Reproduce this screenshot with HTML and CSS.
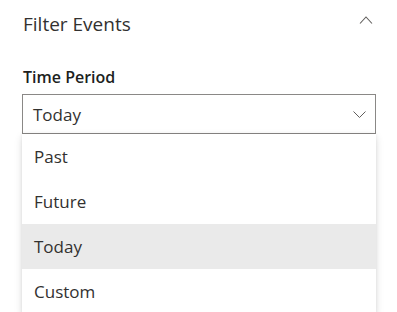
FILE: index.html
```html
<!DOCTYPE html>
<html lang="en">
<head>
    <meta charset="UTF-8">
    <meta name="viewport" content="width=device-width, initial-scale=1.0">
    <title>Filter Events</title>
    <link rel="stylesheet" href="styles.css">
</head>
<body>
    <div class="panel">
        <div class="panel-header">
            <h2 class="panel-title">Filter Events</h2>
            <svg class="chevron-up" width="14" height="8" viewBox="0 0 14 8">
                <path d="M1 7.5 L7 1 L13 7.5" fill="none" stroke="#605e5c" stroke-width="1.1"/>
            </svg>
        </div>
        <div class="field">
            <label class="field-label">Time Period</label>
            <div class="dropdown">
                <div class="dropdown-box">
                    <span class="dropdown-value">Today</span>
                    <svg class="chevron-down" width="13" height="7" viewBox="0 0 13 7">
                        <path d="M0.5 0.5 L6.5 6.5 L12.5 0.5" fill="none" stroke="#605e5c" stroke-width="1"/>
                    </svg>
                </div>
                <ul class="dropdown-list">
                    <li class="option">Past</li>
                    <li class="option">Future</li>
                    <li class="option selected">Today</li>
                    <li class="option">Custom</li>
                </ul>
            </div>
        </div>
    </div>
</body>
</html>
```

FILE: styles.css
```css
html, body {
    margin: 0;
    height: 100%;
}

body {
    background: #ffffff;
    font-family: "Open Sans", "Noto Sans", sans-serif;
    color: #323130;
    overflow: hidden;
}

.panel {
    padding: 10px 21px 0 22px;
}

.panel-header {
    display: flex;
    justify-content: space-between;
    align-items: center;
    height: 28px;
}

.panel-title {
    margin: 0 0 0 1px;
    font-size: 19px;
    font-weight: 400;
    color: #323130;
}

.chevron-up {
    margin-right: 3px;
    margin-top: -8px;
}

.field {
    margin-top: 28px;
}

.field-label {
    display: block;
    font-size: 16px;
    font-weight: 600;
    line-height: 22px;
    margin: 0 0 6px 1px;
    color: #201f1e;
}

.dropdown-box {
    display: flex;
    justify-content: space-between;
    align-items: center;
    height: 38px;
    border: 1px solid #8a8886;
    padding: 0 9px 0 10px;
}

.dropdown-value {
    font-size: 17px;
}

.dropdown-list {
    list-style: none;
    margin: 0;
    padding: 0;
    background: #ffffff;
    box-shadow: 0 3px 8px rgba(0, 0, 0, 0.13), 0 0 3px rgba(0, 0, 0, 0.08);
}

.option {
    height: 45px;
    line-height: 46px;
    padding-left: 12px;
    font-size: 17px;
}

.option.selected {
    background: #eaeaea;
}
```
